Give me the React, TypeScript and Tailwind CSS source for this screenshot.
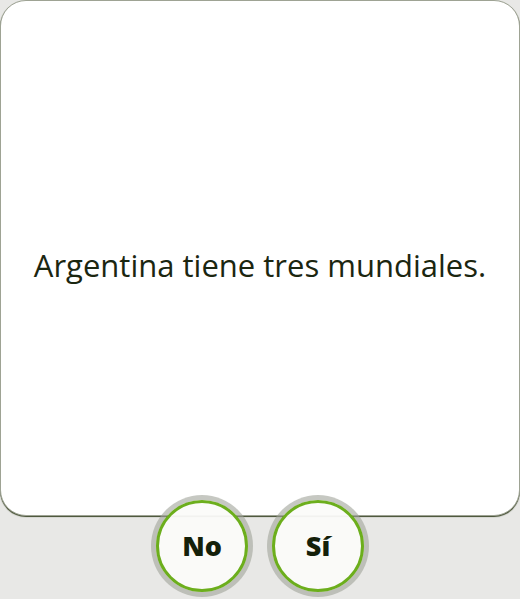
export default function App() {
  return (
    <div className="flex h-[599px] w-[520px] flex-col items-center overflow-hidden bg-[#e8e8e6] font-['Open_Sans',sans-serif]">
      {/* statement card */}
      <div className="flex h-[516px] w-full shrink-0 items-center justify-center rounded-[26px] border border-[#9ea394] bg-white pt-[14px] shadow-[0_1px_1px_#3f4a2c]">
        <p className="text-[31px] text-[#1b2610] [font-variant-ligatures:none]">Argentina tiene tres mundiales.</p>
      </div>

      <div className="relative -mt-[16px] flex gap-[24px]">
        <button className="flex h-[92px] w-[92px] items-center justify-center rounded-full border-[3px] border-[#6cae1c] bg-[#fbfbf9]/95 text-[27px] font-extrabold text-[#14200a] shadow-[0_0_0_5px_rgba(160,164,154,0.6)]">
          No
        </button>
        <button className="flex h-[92px] w-[92px] items-center justify-center rounded-full border-[3px] border-[#6cae1c] bg-[#fbfbf9]/95 text-[27px] font-extrabold text-[#14200a] shadow-[0_0_0_5px_rgba(160,164,154,0.6)]">
          Sí
        </button>
      </div>
    </div>
  );
}
